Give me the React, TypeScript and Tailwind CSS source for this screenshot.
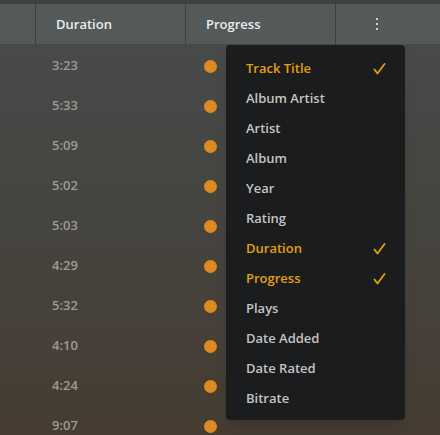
const durations = ["3:23", "5:33", "5:09", "5:02", "5:03", "4:29", "5:32", "4:10", "4:24", "9:07"];

const columns = [
  { label: "Track Title", on: true },
  { label: "Album Artist", on: false },
  { label: "Artist", on: false },
  { label: "Album", on: false },
  { label: "Year", on: false },
  { label: "Rating", on: false },
  { label: "Duration", on: true },
  { label: "Progress", on: true },
  { label: "Plays", on: false },
  { label: "Date Added", on: false },
  { label: "Date Rated", on: false },
  { label: "Bitrate", on: false },
];

const Tick = () => (
  <svg width="13" height="12" viewBox="0 0 13 12" fill="none">
    <path d="M1.5 6.5 L4.5 10.5 L11.5 1" stroke="currentColor" strokeWidth="1.8" strokeLinecap="round" strokeLinejoin="round" />
  </svg>
);

const App = () => {
  return (
    <div
      className="relative w-[440px] h-[435px] overflow-hidden bg-gradient-to-b from-[#484c4c] via-[#45443f] to-[#463c32]"
      style={{ fontFamily: '"Open Sans", "Liberation Sans", sans-serif' }}
    >
      <div className="h-[4px] bg-[#3e4242]" />
      <div className="flex h-[40px] bg-[#545959] text-[13px] font-semibold text-[#ececec]">
        <div className="w-[36px] border-r border-[#3b3f3f]" />
        <div className="w-[150px] border-r border-[#3b3f3f] flex items-center pl-5 pt-[1px]">Duration</div>
        <div className="w-[150px] border-r border-[#3b3f3f] flex items-center pl-5 pt-[1px]">Progress</div>
        <div className="flex-1 flex items-center pl-[40px]">
          <div className="flex flex-col gap-[3px]">
            <span className="w-[2px] h-[2px] bg-[#d0d0d0]" />
            <span className="w-[2px] h-[2px] bg-[#d0d0d0]" />
            <span className="w-[2px] h-[2px] bg-[#d0d0d0]" />
          </div>
        </div>
      </div>
      <div className="border-t border-[#454949]">
        {durations.map((d, i) => (
          <div key={i} className="flex h-[40px] items-center pt-[2px] text-[13px] font-semibold text-[#9b9b98]">
            <div className="w-[36px]" />
            <div className="w-[150px] pl-4">{d}</div>
            <div className="w-[150px] pl-[18px]">
              <span className="block w-[13px] h-[13px] rounded-full bg-[#dd8a22]" />
            </div>
          </div>
        ))}
      </div>

      <div className="absolute left-[226px] top-[45px] w-[179px] h-[375px] rounded-[4px] bg-[#1b1c1e] pt-[9px] shadow-lg">
        {columns.map((c) => (
          <div
            key={c.label}
            className={`flex h-[30px] items-center justify-between pl-5 pr-[19px] text-[13px] font-semibold ${
              c.on ? "text-[#e5a00d]" : "text-[#c4c4c4]"
            }`}
          >
            <span>{c.label}</span>
            {c.on && <Tick />}
          </div>
        ))}
      </div>
    </div>
  );
};

export default App;
